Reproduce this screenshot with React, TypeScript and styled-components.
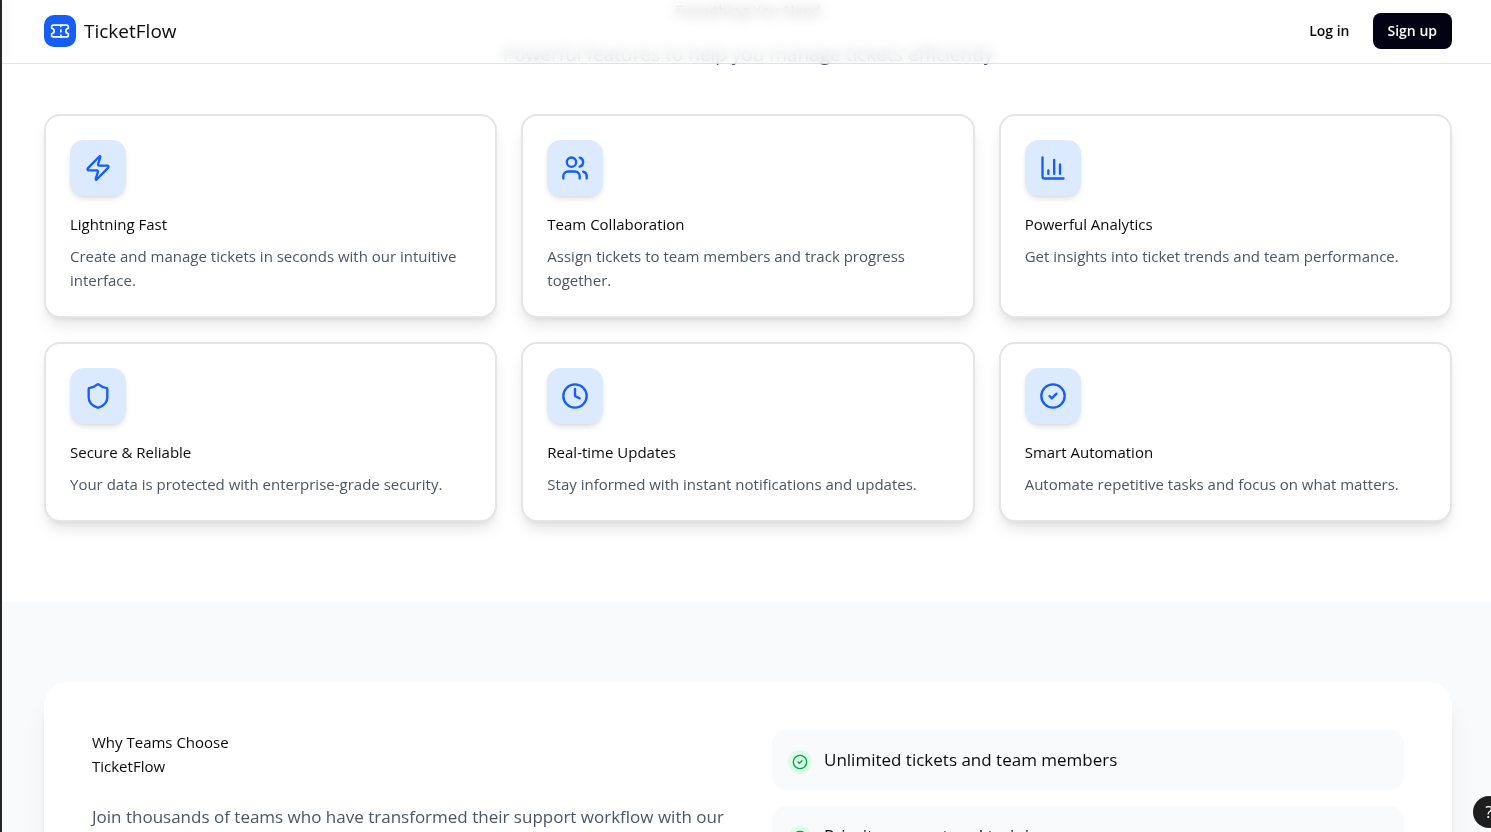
import React from "react";
import styled, { createGlobalStyle } from "styled-components";
import {
  Zap,
  Users,
  ChartColumn,
  Shield,
  Clock,
  CircleCheck,
  Ticket,
  type LucideIcon,
} from "lucide-react";

const GlobalStyle = createGlobalStyle`
  *, *::before, *::after { box-sizing: border-box; }
  html { overflow: hidden; }
  body {
    margin: 0;
    background: #fff;
    color: #0a0a0a;
    font-family: "Open Sans", "Noto Sans", sans-serif;
    font-size: 15px;
    line-height: 24px;
  }
  h2, h3, p, ul { margin: 0; padding: 0; font-weight: 400; font-size: inherit; }
  ul { list-style: none; }
`;

const Page = styled.div`
  height: 100vh;
  overflow: hidden;
  border-left: 2px solid #252628;
  background: #fff;
`;

const Header = styled.header`
  position: fixed;
  z-index: 10;
  top: 0;
  left: 2px;
  right: 0;
  display: flex;
  align-items: center;
  justify-content: space-between;
  height: 64px;
  padding: 0 39px 2px 42px;
  border-bottom: 1px solid rgba(0, 0, 0, 0.1);
  background: rgba(255, 255, 255, 0.7);
  backdrop-filter: blur(4px) blur(4px);
`;

const Brand = styled.a`
  display: flex;
  align-items: center;
  gap: 8px;
  color: inherit;
  font-size: 19px;
  line-height: 28px;
  text-decoration: none;
`;

const Logo = styled.span`
  display: grid;
  place-items: center;
  width: 32px;
  height: 32px;
  border-radius: 10px;
  background: #155dfc;
  color: #fff;
`;

const Actions = styled.nav`
  display: flex;
  align-items: center;
  gap: 8px;
`;

const NavButton = styled.button<{ $primary?: boolean }>`
  height: 36px;
  padding: 0 15px;
  border: 0;
  border-radius: 8px;
  background: ${(p) => (p.$primary ? "#030213" : "transparent")};
  color: ${(p) => (p.$primary ? "#fff" : "#0a0a0a")};
  font: 600 14px/20px "Open Sans", "Noto Sans", sans-serif;
  cursor: pointer;
`;

const Features = styled.section`
  margin-top: -82px;
  padding: 80px 39px 80px 42px;
`;

const Intro = styled.div`
  display: flex;
  flex-direction: column;
  align-items: center;
  gap: 16px;
  margin-bottom: 44px;
  text-align: center;
`;

const Lead = styled.p`
  color: #4a5565;
  font-size: 19px;
  line-height: 32px;
`;

const Grid = styled.div`
  display: grid;
  grid-template-columns: repeat(3, 1fr);
  gap: 24px;
`;

const Card = styled.article`
  padding: 24px;
  border: 2px solid #e5e5e5;
  border-radius: 16px;
  background: #fff;
  box-shadow: 0 10px 15px -3px rgba(0, 0, 0, 0.1), 0 4px 6px -4px rgba(0, 0, 0, 0.1);
`;

const IconTile = styled.div`
  display: grid;
  place-items: center;
  width: 56px;
  height: 56px;
  margin-bottom: 16px;
  border-radius: 14px;
  background: #dbeafe;
  color: #155dfc;
  box-shadow: 0 4px 6px -1px rgba(0, 0, 0, 0.1), 0 2px 4px -2px rgba(0, 0, 0, 0.1);
`;

const CardTitle = styled.h3`
  margin-bottom: 8px;
`;

const CardText = styled.p`
  color: #4a5565;
`;

const Benefits = styled.section`
  padding: 80px 39px 80px 42px;
  background: #f9fafb;
`;

const Panel = styled.div`
  display: grid;
  grid-template-columns: repeat(2, 1fr);
  gap: 48px;
  padding: 48px;
  border-radius: 24px;
  background: #fff;
  box-shadow: 0 20px 25px -5px rgba(0, 0, 0, 0.1), 0 8px 10px -6px rgba(0, 0, 0, 0.1);
`;

const PanelTitle = styled.h2`
  margin-bottom: 24px;
`;

const PanelText = styled.p`
  color: #4a5565;
  font-size: 17px;
  line-height: 30px;
`;

const BenefitList = styled.ul`
  display: flex;
  flex-direction: column;
  gap: 16px;
`;

const Benefit = styled.li`
  display: flex;
  align-items: flex-start;
  gap: 12px;
  padding: 16px;
  border-radius: 14px;
  background: #f9fafb;
  font-size: 17px;
  line-height: 28px;
`;

const Check = styled.span`
  display: grid;
  place-items: center;
  width: 24px;
  height: 24px;
  margin-top: 4px;
  border-radius: 50%;
  background: #dcfce7;
  color: #00a63e;
`;

const HelpButton = styled.button`
  position: fixed;
  right: -14px;
  bottom: 4px;
  width: 32px;
  height: 32px;
  padding: 0;
  border: 0;
  border-radius: 50%;
  background: #1e1e1e;
  color: #fff;
  font: 400 17px/32px "Open Sans", "Noto Sans", sans-serif;
`;

const features: { icon: LucideIcon; title: string; text: string }[] = [
  { icon: Zap, title: "Lightning Fast", text: "Create and manage tickets in seconds with our intuitive interface." },
  { icon: Users, title: "Team Collaboration", text: "Assign tickets to team members and track progress together." },
  { icon: ChartColumn, title: "Powerful Analytics", text: "Get insights into ticket trends and team performance." },
  { icon: Shield, title: "Secure & Reliable", text: "Your data is protected with enterprise-grade security." },
  { icon: Clock, title: "Real-time Updates", text: "Stay informed with instant notifications and updates." },
  { icon: CircleCheck, title: "Smart Automation", text: "Automate repetitive tasks and focus on what matters." },
];

const benefits = ["Unlimited tickets and team members", "Priority support and training"];

export default function App() {
  return (
    <Page>
      <GlobalStyle />
      <Header>
        <Brand href="#">
          <Logo>
            <Ticket size={20} />
          </Logo>
          TicketFlow
        </Brand>
        <Actions>
          <NavButton type="button">Log in</NavButton>
          <NavButton type="button" $primary>
            Sign up
          </NavButton>
        </Actions>
      </Header>
      <main>
        <Features>
          <Intro>
            <h2>Everything You Need</h2>
            <Lead>Powerful features to help you manage tickets efficiently</Lead>
          </Intro>
          <Grid>
            {features.map(({ icon: Icon, title, text }) => (
              <Card key={title}>
                <IconTile>
                  <Icon size={28} />
                </IconTile>
                <CardTitle>{title}</CardTitle>
                <CardText>{text}</CardText>
              </Card>
            ))}
          </Grid>
        </Features>
        <Benefits>
          <Panel>
            <div>
              <PanelTitle>
                Why Teams Choose
                <br />
                TicketFlow
              </PanelTitle>
              <PanelText>Join thousands of teams who have transformed their support workflow with our</PanelText>
            </div>
            <BenefitList>
              {benefits.map((b) => (
                <Benefit key={b}>
                  <Check>
                    <CircleCheck size={16} />
                  </Check>
                  {b}
                </Benefit>
              ))}
            </BenefitList>
          </Panel>
        </Benefits>
      </main>
      <HelpButton type="button" aria-label="Help">
        ?
      </HelpButton>
    </Page>
  );
}
